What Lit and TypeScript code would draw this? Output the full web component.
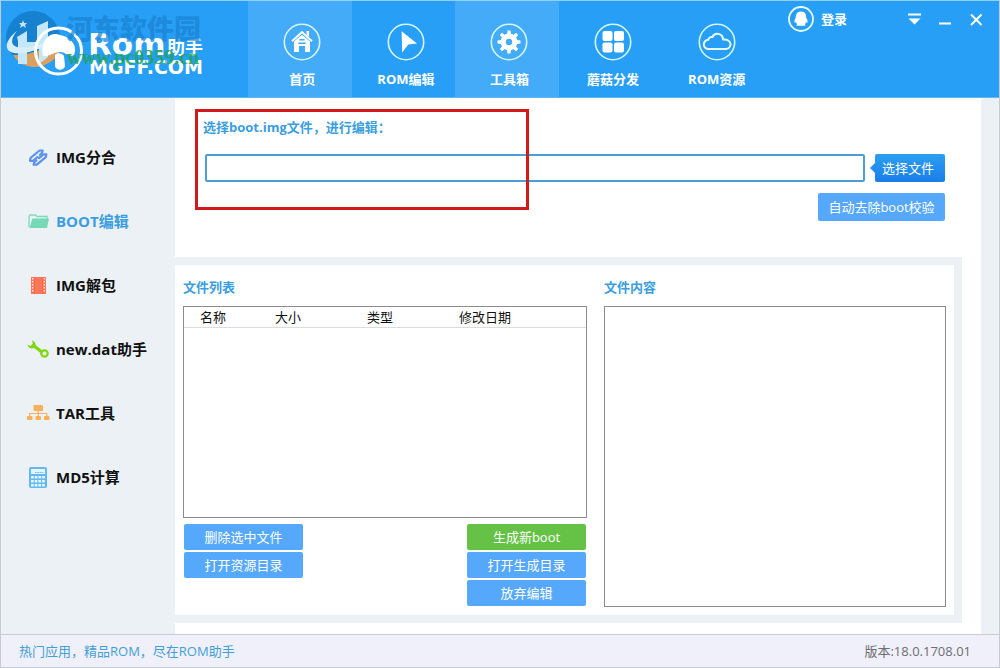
import { LitElement, html, css, svg } from "lit";
import { customElement, state } from "lit/decorators.js";
import { classMap } from "lit/directives/class-map.js";

const ring = svg`<circle cx="19" cy="19" r="17.7" fill="none" stroke="#d6f6ff" stroke-width="1.6"/>`;

const tabs = [
  {
    name: "首页",
    lit: true,
    icon: svg`<path d="M9 18.2 19 9l10 9.2" fill="none" stroke="#fff" stroke-width="2"/><path d="M23.5 8h2.6v6l-2.6-2.4z" fill="#fff"/><path fill-rule="evenodd" d="M11 18.6 19 11.8l8 6.8V29h-5v-6h-6v6h-5zM16.4 16v1.6h5.2V16zM15.4 19.4v1.5h7.2v-1.5z" fill="#fff"/>`,
  },
  {
    name: "ROM编辑",
    lit: false,
    icon: svg`<path d="M14.6 8.2 30 20.6l-8.6 1-6.2 8z" fill="#fff"/>`,
  },
  {
    name: "工具箱",
    lit: true,
    icon: svg`<g fill="#fff">${[0, 45, 90, 135].map(
      (a) => svg`<path transform="rotate(${a} 19 19)" d="M17 11.5 17.5 7.5h3l.5 4v15l-.5 4h-3l-.5-4z"/>`
    )}<circle cx="19" cy="19" r="8.4"/></g><circle cx="19" cy="19" r="3.2" fill="#43abf8"/>`,
  },
  {
    name: "蘑菇分发",
    lit: false,
    icon: svg`<g fill="#fff"><rect x="8.5" y="8" width="10" height="10" rx="2"/><rect x="20" y="8" width="10" height="10" rx="2"/><rect x="8.5" y="19.5" width="10" height="10" rx="2"/><rect x="20" y="19.5" width="10" height="10" rx="2"/></g>`,
  },
  {
    name: "ROM资源",
    lit: false,
    icon: svg`<path d="M10.500 26a4.600 4.600 0 0 1-.2-9.200 3.400 3.400 0 0 1 4.100-2.800 5.600 5.600 0 0 1 10.600 2.600c4.800-.4 7.500 1.800 7.500 4.700a4.700 4.700 0 0 1-4.700 4.700z" fill="none" stroke="#e6fbff" stroke-width="2" stroke-linejoin="round"/>`,
  },
];

const tools = [
  {
    name: "IMG分合",
    icon: svg`<g fill="none" stroke="#5d93f0" stroke-width="2.200" stroke-linejoin="round" stroke-linecap="round"><path d="M10.500 11 6 14.800H3l.5-2.800 9-7.500h3.200l-.8 2.600-2 1.700"/><path d="m12 12.200 4.500-3.900h2.800l-.5 2.900-9 7.500H6.600l.8-2.600 2-1.700"/></g>`,
  },
  {
    name: "BOOT编辑",
    icon: svg`<path d="M2 17V6.500L3 5h5.500l1.500 1.500h10V9" fill="none" stroke="#79dcb8" stroke-width="1.300"/><path d="M5.500 8.500H22L20 18H2.500z" fill="#74d9b4"/>`,
  },
  {
    name: "IMG解包",
    icon: svg`<rect x="4" y="3" width="15" height="17" fill="#ff7658"/><path d="M5.700 4v15M17.300 4v15" stroke="#ffe4dc" stroke-width="1.400" stroke-dasharray="1.500 1.500"/><path d="M7.500 3v17M15.500 3v17" stroke="#e9684c" stroke-width=".8"/>`,
  },
  {
    name: "new.dat助手",
    icon: svg`<path d="m5 6.500 10.500 8" stroke="#7ed614" stroke-width="3.400"/><path d="M5 2.500 6 6 3.500 8 .5 6.500C1 10 4.500 11.500 7.500 9.800 9.500 8 9 3.500 5 2.500z" fill="#7ed614"/><circle cx="17.500" cy="15.500" r="3.200" fill="none" stroke="#7ed614" stroke-width="2.200"/>`,
  },
  {
    name: "TAR工具",
    icon: svg`<g fill="#f9b05c"><rect x="6.500" y="3" width="9.500" height="6" rx="1"/><rect x="0" y="14" width="5.500" height="4" rx="1"/><rect x="8.500" y="14" width="5.500" height="4" rx="1"/><rect x="17" y="14" width="5.500" height="4" rx="1"/></g><path d="M2.700 14v-2.500h17V14M11.200 9v5" fill="none" stroke="#f9b05c" stroke-width="1.200"/>`,
  },
  {
    name: "MD5计算",
    icon: svg`<rect x="2" y="1" width="18" height="21" rx="2" fill="#62b8f5"/><rect x="4" y="3" width="14" height="5" fill="#e6f6ff"/><path d="M8 6.500h9" stroke="#62b8f5" stroke-width="1" stroke-dasharray="1.500 .8"/><g fill="#e9f7ff">${[10, 14, 18].map((y) =>
      [4, 7.7, 11.4, 15.1].map((x) => svg`<rect x="${x}" y="${y}" width="2.700" height="2.500"/>`)
    )}</g>`,
  },
];

@customElement("app-root")
export class AppRoot extends LitElement {
  @state() private tool = 1;

  static styles = css`
    :host {
      display: block;
      font: 13px/20px "Open Sans", "Noto Sans CJK SC", sans-serif;
      color: #111;
    }
    * {
      box-sizing: border-box;
    }
    button,
    input {
      font: inherit;
      margin: 0;
      padding: 0;
      border: 0;
      background: none;
      color: inherit;
    }
    a {
      color: inherit;
      text-decoration: none;
    }
    svg {
      display: block;
      flex: none;
    }
    h2 {
      margin: 0;
      font-size: 13px;
      line-height: 20px;
      color: #3a9ee0;
    }
    .window {
      display: flex;
      flex-direction: column;
      height: 100vh;
      border: 1px solid #c6cbd2;
      border-top-color: #93cff8;
      background: #ecf1f5;
    }
    .header {
      display: flex;
      flex: none;
      height: 97px;
      border-bottom: 1px solid #63b5f2;
      background: #279ff6;
      color: #fff;
    }
    .logo {
      width: 247px;
    }
    .nav {
      display: grid;
      grid-template-columns: repeat(5, 1fr);
      width: 518px;
    }
    .tab {
      display: flex;
      flex-direction: column;
      align-items: center;
      gap: 8px;
      padding: 22px 0 0 5px;
      font-weight: 700;
    }
    .tab.lit {
      background: #43abf8;
    }
    .controls {
      display: flex;
      align-items: center;
      height: 36px;
      margin-left: auto;
      padding-right: 14px;
    }
    .login {
      display: flex;
      align-items: center;
      gap: 7px;
      margin-right: 58px;
      font-weight: 700;
    }
    .winbuttons {
      display: flex;
      gap: 13px;
    }
    .body {
      display: flex;
      flex: 1;
      min-height: 0;
    }
    .sidebar {
      display: flex;
      flex-direction: column;
      width: 174px;
      padding-top: 27px;
      flex: none;
    }
    .item {
      display: flex;
      align-items: center;
      gap: 6px;
      height: 64px;
      padding-left: 26px;
      font-size: 15px;
      font-weight: 700;
    }
    .item.current {
      color: #3a9ee0;
    }
    .main {
      display: flex;
      flex-direction: column;
      flex: 1;
      margin-right: 18px;
      padding-bottom: 11px;
      background: #fff;
    }
    .picker {
      position: relative;
      display: flex;
      flex-direction: column;
      height: 159px;
      padding: 19px 36px 0 28px;
    }
    .caption {
      font-weight: 700;
      color: #3a9ee0;
    }
    .row {
      display: flex;
      gap: 10px;
      margin-top: 17px;
      padding-left: 2px;
    }
    .path {
      flex: 1;
      min-width: 0;
      height: 28px;
      padding: 0 6px;
      border: 2px solid #4a9fd6;
      border-radius: 2px;
      background: #fff;
      color: #111;
    }
    .choose {
      position: relative;
      width: 70px;
      height: 28px;
      padding-right: 4px;
      border-radius: 2px;
      background: linear-gradient(#2c9ff2, #1a7ee9);
      color: #fff;
    }
    .choose::before {
      content: "";
      position: absolute;
      left: -5px;
      top: 9px;
      border: 5px solid transparent;
      border-left: 0;
      border-right-color: #248ff0;
    }
    .button {
      height: 26px;
      border-radius: 2px;
      background: #56a8fd;
      color: #fff;
    }
    .button.wide {
      align-self: flex-end;
      width: 127px;
      height: 28px;
      margin-top: 11px;
    }
    .button.green {
      background: #65c247;
    }
    .mark {
      position: absolute;
      left: 20px;
      top: 11px;
      width: 334px;
      height: 101px;
      border: 3px solid #d01a1c;
      pointer-events: none;
    }
    .files {
      display: grid;
      grid-template-columns: 404fr 342fr;
      gap: 17px;
      flex: 1;
      min-height: 0;
      margin-right: 19px;
      padding: 12px 8px 8px;
      border: 8px solid #ecf1f5;
      border-left: 0;
    }
    .column {
      display: flex;
      flex-direction: column;
      min-height: 0;
      gap: 9px;
    }
    .list,
    .content {
      flex: 1;
      min-height: 0;
      border: 1px solid #8c8c8c;
      background: #fff;
    }
    .list {
      margin-bottom: -3px;
    }
    .table {
      width: 100%;
      table-layout: fixed;
      border-collapse: collapse;
    }
    .table th {
      padding: 0 0 0 16px;
      border-bottom: 1px solid #dcdcdc;
      font-weight: 400;
      text-align: left;
    }
    .narrow {
      width: 75px;
    }
    .medium {
      width: 92px;
    }
    .actions {
      display: flex;
      justify-content: space-between;
      padding: 0 1px 1px;
    }
    .stack {
      display: flex;
      flex-direction: column;
      gap: 2px;
      width: 119px;
    }
    .footer {
      display: flex;
      align-items: center;
      justify-content: space-between;
      flex: none;
      height: 33px;
      padding: 0 28px 0 18px;
      border-top: 1px solid #c9cad3;
      background: #f0f0fa;
      color: #6e6e72;
    }
    .slogan {
      color: #3f9fd6;
    }
    .rom {
      font: 700 31px "DejaVu Sans", sans-serif;
    }
    .assistant {
      font: 700 18px "Noto Sans CJK SC", sans-serif;
    }
    .domain {
      font: 700 19px "DejaVu Sans", sans-serif;
    }
    .site {
      font: 900 27px "Noto Sans CJK SC", sans-serif;
    }
    .url {
      font: 700 20px "Liberation Serif", serif;
    }
  `;

  private logo() {
    return html`<svg class="logo" height="96" viewBox="1 1 247 96" aria-label="Rom助手">
      <circle cx="33" cy="38" r="27" fill="#1681cf" />
      <path d="M27 66C45 64 58 53 61 38c3 15-9 28-27 28z" fill="#e0a35c" />
      <path d="M13 55c10 1 31-4 46-16l2 8c-4 13-15 20-27 20-9 0-17-5-21-12z" fill="#d9a05f" />
      <g fill="#c5e7fc">
        <path d="M17 37 27 31v33h-9V41z" />
        <path d="M27 42h10v-16l11-5v36l-9 7V49H27z" />
        <path d="m23 20 1 3h3l-2 2 1 3-3-2-3 2 1-3-2-2h3z" />
      </g>
      <path d="M17 31C4 41 4 51 14 53c14 2 34-6 45-18C46 44 27 50 17 47c-7-2-6-9 0-16z" fill="#d7effd" />
      <circle cx="58.500" cy="51" r="23" fill="none" stroke="#fff" stroke-width="3" />
      <path d="M43 56c-3-16 7-25 17-21 11 2 18 11 14 20-5 3-8-3-14-3-7 0-10 5-17 4z" fill="#fff" />
      <path d="M55 55c2-3 8-2 9 1l1 10c-1 5-9 5-10 0z" fill="#fff" />
      <text class="rom" x="88" y="55" fill="#fff">Rom</text>
      <text class="assistant" x="167" y="54" fill="#fff">助手</text>
      <text class="domain" x="89" y="74" fill="#fff">MGFF.COM</text>
      <text class="site" x="66" y="39" fill="#1b83d3" fill-opacity=".72">河东软件园</text>
      <text class="url" x="67" y="64" fill="#1fa25c" fill-opacity=".88">www.pc0359.cn</text>
    </svg>`;
  }

  render() {
    return html`<div class="window">
      <header class="header">
        ${this.logo()}
        <nav class="nav">
          ${tabs.map(
            (t) => html`<a href="#" class=${classMap({ tab: true, lit: t.lit })}>
              <svg width="38" height="38" viewBox="0 0 38 38">${ring}${t.icon}</svg>${t.name}
            </a>`
          )}
        </nav>
        <div class="controls">
          <button class="login">
            <svg width="26" height="26" viewBox="0 0 26 26">
              <circle cx="13" cy="13" r="12" fill="none" stroke="#e8fbff" stroke-width="1.800" />
              <path
                d="M13 5.500c4 0 5.300 3 5.200 6.300.9 1.400 1.700 3 1.300 4.700-.4.600-1-.2-1.400-.6-.2 1-.7 1.700-1.200 2.300 1 .6.8 1.600-.5 1.600H9.600c-1.300 0-1.500-1-.5-1.600-.5-.6-1-1.300-1.200-2.300-.4.400-1 1.200-1.400.6-.4-1.700.4-3.300 1.300-4.700C7.700 8.500 9 5.500 13 5.500z"
                fill="#fff"
              />
            </svg>登录
          </button>
          <div class="winbuttons">
            <button aria-label="菜单">
              <svg width="18" height="18" viewBox="0 0 18 18">
                <path d="M3 4.500h13" stroke="#fff" stroke-width="2" />
                <path d="M3.500 8.500h12l-6 6z" fill="#fff" />
              </svg>
            </button>
            <button aria-label="最小化">
              <svg width="18" height="18" viewBox="0 0 18 18">
                <path d="M3 13.500h12" stroke="#fff" stroke-width="2" />
              </svg>
            </button>
            <button aria-label="关闭">
              <svg width="18" height="18" viewBox="0 0 18 18">
                <path d="m4 4.500 10.500 10.500M14.500 4.500 4 15" stroke="#fff" stroke-width="2" />
              </svg>
            </button>
          </div>
        </div>
      </header>
      <div class="body">
        <nav class="sidebar">
          ${tools.map(
            (t, i) => html`<button
              class=${classMap({ item: true, current: i === this.tool })}
              @click=${() => (this.tool = i)}
            >
              <svg width="23" height="23" viewBox="0 0 23 23">${t.icon}</svg>${t.name}
            </button>`
          )}
        </nav>
        <main class="main">
          <section class="picker">
            <label class="caption" for="path">选择boot.img文件，进行编辑：</label>
            <div class="row">
              <input class="path" id="path" type="text" />
              <button class="choose">选择文件</button>
            </div>
            <button class="button wide">自动去除boot校验</button>
            <div class="mark"></div>
          </section>
          <section class="files">
            <div class="column">
              <h2>文件列表</h2>
              <div class="list">
                <table class="table">
                  <thead>
                    <tr>
                      <th class="narrow">名称</th>
                      <th class="medium">大小</th>
                      <th class="medium">类型</th>
                      <th>修改日期</th>
                    </tr>
                  </thead>
                </table>
              </div>
              <div class="actions">
                <div class="stack">
                  <button class="button">删除选中文件</button>
                  <button class="button">打开资源目录</button>
                </div>
                <div class="stack">
                  <button class="button green">生成新boot</button>
                  <button class="button">打开生成目录</button>
                  <button class="button">放弃编辑</button>
                </div>
              </div>
            </div>
            <div class="column">
              <h2>文件内容</h2>
              <div class="content"></div>
            </div>
          </section>
        </main>
      </div>
      <footer class="footer">
        <a class="slogan" href="#">热门应用，精品ROM，尽在ROM助手</a>
        <span>版本:18.0.1708.01</span>
      </footer>
    </div>`;
  }
}
